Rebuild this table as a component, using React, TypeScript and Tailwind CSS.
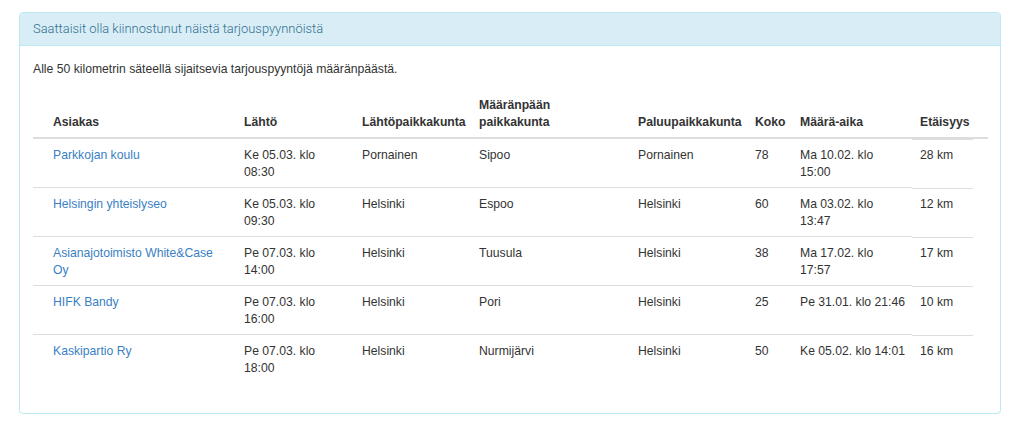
import React from "react";

type Row = {
  customer: string;
  departure: string[];
  from: string;
  to: string;
  back: string;
  size: string;
  deadline: string[];
  distance: string;
};

const rows: Row[] = [
  {
    customer: "Parkkojan koulu",
    departure: ["Ke 05.03. klo", "08:30"],
    from: "Pornainen",
    to: "Sipoo",
    back: "Pornainen",
    size: "78",
    deadline: ["Ma 10.02. klo", "15:00"],
    distance: "28 km",
  },
  {
    customer: "Helsingin yhteislyseo",
    departure: ["Ke 05.03. klo", "09:30"],
    from: "Helsinki",
    to: "Espoo",
    back: "Helsinki",
    size: "60",
    deadline: ["Ma 03.02. klo", "13:47"],
    distance: "12 km",
  },
  {
    customer: "Asianajotoimisto White&Case Oy",
    departure: ["Pe 07.03. klo", "14:00"],
    from: "Helsinki",
    to: "Tuusula",
    back: "Helsinki",
    size: "38",
    deadline: ["Ma 17.02. klo", "17:57"],
    distance: "17 km",
  },
  {
    customer: "HIFK Bandy",
    departure: ["Pe 07.03. klo", "16:00"],
    from: "Helsinki",
    to: "Pori",
    back: "Helsinki",
    size: "25",
    deadline: ["Pe 31.01. klo 21:46"],
    distance: "10 km",
  },
  {
    customer: "Kaskipartio Ry",
    departure: ["Pe 07.03. klo", "18:00"],
    from: "Helsinki",
    to: "Nurmijärvi",
    back: "Helsinki",
    size: "50",
    deadline: ["Ke 05.02. klo 14:01"],
    distance: "16 km",
  },
];

const th = "text-left align-bottom font-bold pl-[8px] pr-0 pt-[9px] pb-[6px]";
const td = "align-top pl-[8px] pr-0 pt-[8px] pb-[6px] border-t border-[#dddddd]";

export default function App() {
  return (
    <div
      className="w-[1024px] h-[426px] bg-white pt-[12px] pl-[19px] text-[#333333]"
      style={{ fontFamily: '"Liberation Sans", Arial, sans-serif' }}
    >
      <div className="w-[982px] h-[402px] border border-[#bce8f1] rounded-[4px] overflow-hidden">
        {/* Panel heading */}
        <div className="h-[33px] bg-[#d9edf7] border-b border-[#bce8f1] px-[13px] flex items-center">
          <h3 className="text-[12.9px] text-[#31708f] font-light leading-none font-['Roboto',sans-serif]">
            Saattaisit olla kiinnostunut näistä tarjouspyynnöistä
          </h3>
        </div>

        {/* Panel body */}
        <div className="px-[13px] pt-[15px] text-[12.2px] leading-[17px]">
          <p>Alle 50 kilometrin säteellä sijaitsevia tarjouspyyntöjä määränpäästä.</p>

          <table className="mt-[10px] w-[955px] table-fixed border-collapse">
            <colgroup>
              <col className="w-[203px]" />
              <col className="w-[118px]" />
              <col className="w-[117px]" />
              <col className="w-[159px]" />
              <col className="w-[117px]" />
              <col className="w-[45px]" />
              <col className="w-[120px]" />
              <col className="w-[76px]" />
            </colgroup>
            <thead>
              <tr className="border-b-2 border-[#dddddd]">
                <th className={`${th} pl-[20px]`}>Asiakas</th>
                <th className={th}>Lähtö</th>
                <th className={th}>Lähtöpaikkakunta</th>
                <th className={th}>
                  Määränpään
                  <br />
                  paikkakunta
                </th>
                <th className={th}>Paluupaikkakunta</th>
                <th className={th}>Koko</th>
                <th className={th}>Määrä-aika</th>
                <th className={th}>Etäisyys</th>
              </tr>
            </thead>
            <tbody>
              {rows.map((r) => (
                <tr key={r.customer}>
                  <td className={`${td} pl-[20px] pr-[14px]`}>
                    <a href="#" className="text-[#3a7fc4]">
                      {r.customer}
                    </a>
                  </td>
                  <td className={td}>
                    {r.departure.map((l) => (
                      <div key={l}>{l}</div>
                    ))}
                  </td>
                  <td className={td}>{r.from}</td>
                  <td className={td}>{r.to}</td>
                  <td className={td}>{r.back}</td>
                  <td className={td}>{r.size}</td>
                  <td className={td}>
                    {r.deadline.map((l) => (
                      <div key={l}>{l}</div>
                    ))}
                  </td>
                  {/* separator stops short of the table edge */}
                  <td className="align-top pl-[8px] pt-[8px] pb-[6px] bg-no-repeat bg-top-left bg-[linear-gradient(#dddddd,#dddddd)] bg-[length:61px_1px]">
                    {r.distance}
                  </td>
                </tr>
              ))}
            </tbody>
          </table>
        </div>
      </div>
    </div>
  );
}
